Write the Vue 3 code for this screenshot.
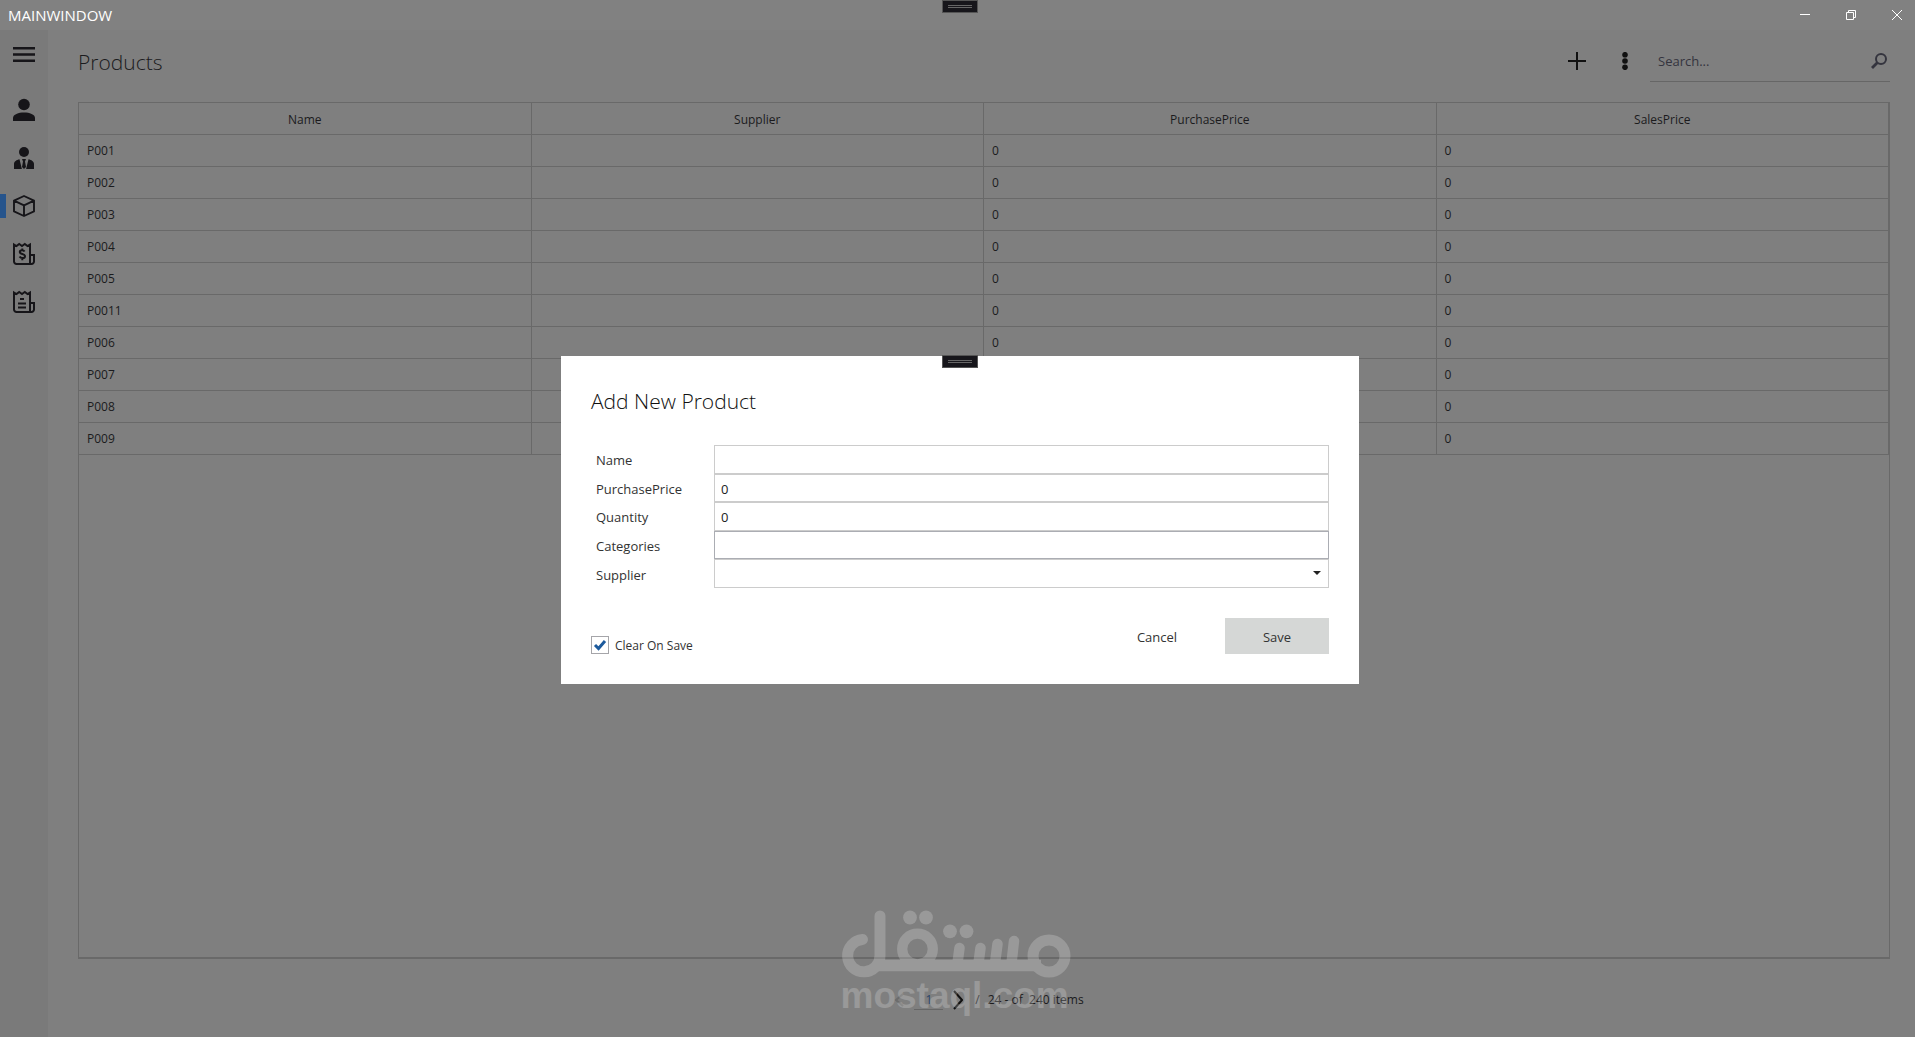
<script setup>
import { ref } from 'vue'

const columns = ['Name', 'Supplier', 'PurchasePrice', 'SalesPrice']
const names = ['P001', 'P002', 'P003', 'P004', 'P005', 'P0011', 'P006', 'P007', 'P008', 'P009']
const name = ref('')
const purchasePrice = ref('0')
const quantity = ref('0')
const categories = ref('')
const supplier = ref('')
const clearOnSave = ref(true)
</script>

<template>
  <div class="window">
    <header class="titlebar">
      <span class="app-title">MAINWINDOW</span>
      <div class="window-buttons">
        <button type="button" aria-label="Minimize">
          <svg viewBox="0 0 16 16"><path d="M3 7.500h10" /></svg>
        </button>
        <button type="button" aria-label="Restore">
          <svg viewBox="0 0 16 16"><path d="M3.500 5.500h7v7h-7zM5.500 5.500v-2h7v7h-2" /></svg>
        </button>
        <button type="button" aria-label="Close">
          <svg viewBox="0 0 16 16"><path d="M3 3l10 10M13 3L3 13" /></svg>
        </button>
      </div>
    </header>

    <div class="body">
      <nav class="sidebar">
        <button type="button" class="nav-item menu" aria-label="Menu">
          <svg viewBox="0 0 22 22"><path d="M0 5.200h22M0 11.500h22M0 17.700h22" fill="none" stroke="currentColor" stroke-width="2.400" /></svg>
        </button>
        <button type="button" class="nav-item" aria-label="Customers">
          <svg viewBox="0 0 22 22"><circle cx="11" cy="5.500" r="5.800" /><path d="M0 22v-3c0-3.600 5.500-5.500 11-5.500s11 1.900 11 5.500v3z" /></svg>
        </button>
        <button type="button" class="nav-item" aria-label="Suppliers">
          <svg viewBox="0 0 22 22"><circle cx="11" cy="5" r="5" /><path d="M6.500 12.300l2.400 9.700H1v-5c0-2.600 2.600-4 5.500-4.700zM15.500 12.300l-2.400 9.700H21v-5c0-2.600-2.600-4-5.500-4.700zM9 12h4l-1 2.600 1 5.400-2 2-2-2 1-5.400z" /></svg>
        </button>
        <button type="button" class="nav-item active" aria-label="Products">
          <svg viewBox="0 0 22 22"><path d="M11 1l10 4.600v10.800L11 21 1 16.400V5.600zM1 5.600l10 4.700 10-4.700M11 10.300V21" fill="none" stroke="currentColor" stroke-width="1.900" stroke-linejoin="round" /></svg>
        </button>
        <button type="button" class="nav-item" aria-label="Sales">
          <svg viewBox="0 0 22 22">
            <g fill="none" stroke="currentColor" stroke-width="2">
              <path d="M1 1.500l2.500 1.500 2.700-2 2.800 2 2.800-2 2.700 2L17 1.500V21H3.500A2.500 2.500 0 0 1 1 18.500zM17 12h4v6.500A2.500 2.500 0 0 1 18.500 21H16" />
              <path d="M11.600 8.600c-.6-1-1.400-1.300-2.500-1.300-1.400 0-2.300.7-2.300 1.700 0 2.700 5.200 1.300 5.200 4.200 0 1.200-1 1.900-2.600 1.900-1.200 0-2.200-.5-2.800-1.500M9.300 5.500v2M9.300 15v2.200" />
            </g>
          </svg>
        </button>
        <button type="button" class="nav-item" aria-label="Purchases">
          <svg viewBox="0 0 22 22">
            <g fill="none" stroke="currentColor" stroke-width="2">
              <path d="M1 1.500l2.500 1.500 2.700-2 2.800 2 2.800-2 2.700 2L17 1.500V21H3.500A2.500 2.500 0 0 1 1 18.500zM17 12h4v6.500A2.500 2.500 0 0 1 18.500 21H16" />
              <path d="M7 8h4M5 12.500h8M5 16.500h8" />
            </g>
          </svg>
        </button>
      </nav>

      <main class="content">
        <div class="toolbar">
          <h1>Products</h1>
          <button type="button" class="tool" aria-label="Add">
            <svg viewBox="0 0 18 18"><path d="M9 0v18M0 9h18" fill="none" stroke="currentColor" stroke-width="2" /></svg>
          </button>
          <button type="button" class="tool" aria-label="More">
            <svg viewBox="0 0 18 18"><circle cx="9" cy="2.700" r="2.800" /><circle cx="9" cy="9" r="2.800" /><circle cx="9" cy="15.300" r="2.800" /></svg>
          </button>
          <label class="search">
            <input type="text" placeholder="Search..." aria-label="Search" />
            <svg viewBox="0 0 16 16"><circle cx="10" cy="6" r="5" fill="none" stroke="currentColor" stroke-width="2" /><path d="M6.500 9.500L1 15" fill="none" stroke="currentColor" stroke-width="2.800" /></svg>
          </label>
        </div>

        <div class="grid-frame">
          <table>
            <thead>
              <tr><th v-for="c in columns" :key="c" scope="col">{{ c }}</th></tr>
            </thead>
            <tbody>
              <tr v-for="n in names" :key="n">
                <td>{{ n }}</td>
                <td></td>
                <td>0</td>
                <td>0</td>
              </tr>
            </tbody>
          </table>
        </div>

        <footer class="pager">
          <button type="button" class="previous" aria-label="Previous page">
            <svg viewBox="0 0 10 20"><path d="M9 4L2 10l7 6" /></svg>
          </button>
          <input type="text" value="1" aria-label="Page" />
          <button type="button" class="next" aria-label="Next page">
            <svg viewBox="0 0 10 20"><path d="M1 1l8 9-8 9" /></svg>
          </button>
          <span class="slash">/</span>
          <span>24 - of&nbsp; 240 items</span>
        </footer>
      </main>
    </div>

    <div class="overlay">
      <span class="grip window-grip"></span>
      <form class="dialog" role="dialog" aria-labelledby="dialog-title" @submit.prevent>
        <span class="grip dialog-grip"></span>
        <h2 id="dialog-title">Add New Product</h2>
        <div class="fields">
          <label for="f-name">Name</label>
          <input id="f-name" v-model="name" type="text" />
          <label for="f-price">PurchasePrice</label>
          <input id="f-price" v-model="purchasePrice" type="text" />
          <label for="f-quantity">Quantity</label>
          <input id="f-quantity" v-model="quantity" type="text" />
          <label for="f-categories">Categories</label>
          <input id="f-categories" v-model="categories" type="text" class="strong" />
          <label for="f-supplier">Supplier</label>
          <div class="select-box">
            <select id="f-supplier" v-model="supplier"><option value=""></option></select>
            <svg viewBox="0 0 8 4"><path d="M0 0h8L4 4z" /></svg>
          </div>
        </div>
        <div class="actions">
          <label class="check">
            <input v-model="clearOnSave" type="checkbox" />
            <svg v-if="clearOnSave" viewBox="0 0 18 18"><path d="M4 9l3.500 3.500L14 5" /></svg>
            <span>Clear On Save</span>
          </label>
          <button type="button">Cancel</button>
          <button type="submit" class="save">Save</button>
        </div>
      </form>
    </div>

    <div class="watermark">
      <svg viewBox="0 0 230 68" role="img" aria-label="مستقل">
        <g fill="none" stroke="currentColor" stroke-width="11" stroke-linecap="round">
          <circle cx="208" cy="46" r="16" />
          <circle cx="76.500" cy="39" r="15.300" stroke-width="10.300" />
          <path d="M21.500 29.500a16.200 16.200 0 1 0 17.500 16V6" />
          <path d="M34 55.500H200" stroke-width="11.500" stroke-linecap="butt" />
          <path d="M118.500 38l-2 15M139.500 38l-2 15M156.500 34l-2.500 19M173 31l-2.500 22" stroke-width="10.500" />
        </g>
        <circle cx="69" cy="7.500" r="6.900" /><circle cx="85" cy="7.500" r="6.900" />
        <circle cx="109" cy="21.300" r="6.900" /><circle cx="125.500" cy="21.300" r="6.900" />
      </svg>
      <span>mostaql.com</span>
    </div>
  </div>
</template>

<style>
body { background: #7f7f7f; }
</style>

<style scoped>
* { box-sizing: border-box; }
.window {
  position: relative;
  display: flex;
  flex-direction: column;
  min-height: 100vh;
  background: #7f7f7f;
  color: #1b1b1d;
  font: 12px/16px "Open Sans", "Noto Sans", sans-serif;
}
button, input, select { margin: 0; padding: 0; border: 0; border-radius: 0; background: none; color: inherit; font: inherit; outline: 0; }
svg { display: block; fill: currentColor; }
h1, h2 { margin: 0; font-size: 21px; line-height: 30px; font-weight: 300; }

.titlebar { display: flex; align-items: center; justify-content: space-between; height: 30px; padding: 0 10px 0 8px; background: #818181; color: #fff; }
.app-title { font-size: 15px; line-height: 20px; }
.window-buttons { display: flex; gap: 30px; }
.window-buttons svg { width: 16px; height: 16px; fill: none; stroke: #fff; stroke-width: 1; }

.body { display: flex; flex: 1; }
.sidebar { display: flex; flex-direction: column; width: 48px; background: #7a7a7a; color: #161519; }
.nav-item { display: grid; place-items: center; width: 48px; height: 48px; }
.nav-item.menu { margin-bottom: 8px; }
.nav-item svg { width: 22px; height: 22px; overflow: visible; }
.nav-item.active { background: linear-gradient(#26548c, #26548c) 0 50% / 6px 24px no-repeat; }

.content { display: flex; flex: 1; flex-direction: column; padding: 10px 25px 0 30px; }
.toolbar { display: flex; align-items: center; height: 42px; margin-bottom: 20px; }
.toolbar h1 { flex: 1; padding-top: 2px; line-height: 42px; }
.tool { display: grid; place-items: center; width: 48px; height: 42px; color: #111; }
.tool svg { width: 18px; height: 18px; }
.search { display: flex; align-items: center; width: 240px; height: 42px; margin-left: 1px; padding: 0 3px 0 8px; border-bottom: 1px solid #666; color: #34343e; }
.search input { flex: 1; min-width: 0; font-size: 13px; }
.search input::placeholder { color: #34343e; opacity: 1; }
.search svg { width: 16px; height: 16px; }

.grid-frame { flex: 1; border: 1px solid #696969; border-bottom-width: 2px; }
table { width: 100%; border-collapse: separate; border-spacing: 0; table-layout: fixed; }
th, td { height: 32px; padding: 0 8px; border-right: 1px solid #696969; border-bottom: 1px solid #696969; font-weight: 400; text-align: left; }
th { padding-top: 2px; text-align: center; }

.pager { display: flex; align-items: center; justify-content: center; height: 78px; padding: 4px 0 0 10px; }
.pager svg { width: 10px; height: 20px; fill: none; stroke: currentColor; stroke-width: 2; }
.pager .previous { color: #6c6c6c; }
.pager input { width: 29px; height: 20px; margin: 0 10px; border-bottom: 1px solid #666; color: #2b4468; text-align: center; }
.pager .next { color: #111; }
.pager .slash { margin: 0 8px 0 12px; }

.overlay { position: absolute; inset: 0; display: grid; place-items: center; padding: 3px 0 0 5px; }
.grip { position: absolute; left: 50%; width: 36px; height: 13px; margin-left: -18px; border: 1px solid #555; background: linear-gradient(#666, #666) 50% 4px / 24px 1px no-repeat, linear-gradient(#666, #666) 50% 6px / 24px 1px no-repeat, #17161b; }
.window-grip { top: 0; margin-left: -16px; }
.dialog-grip { top: -1px; }
.dialog { position: relative; width: 798px; padding: 30px; background: #fff; color: #333; }
.dialog h2 { margin-bottom: 29px; color: #111; }
.fields { display: grid; grid-template-columns: 123px 1fr; grid-template-rows: repeat(5, 1fr); height: 143px; font-size: 13px; }
.fields label { align-self: center; padding: 2px 0 0 5px; }
.fields input, .select-box { min-height: 0; border: 1px solid #ccc; background: #fff; color: #222; }
.fields input { width: 100%; padding: 2px 6px 0; }
.fields .strong { border-color: #abadb3; }
.select-box { position: relative; }
.select-box select { display: block; width: 100%; height: 100%; appearance: none; }
.select-box svg { position: absolute; top: 11px; right: 7px; width: 8px; height: 4px; pointer-events: none; }
.actions { display: flex; align-items: flex-end; gap: 16px; margin-top: 30px; }
.actions button { width: 104px; height: 36px; padding-top: 2px; font-size: 13px; }
.actions .save { background: #d5d7d6; }
.check { position: relative; display: flex; flex: 1; align-items: center; gap: 6px; height: 18px; }
.check span { padding-top: 2px; }
.check input { width: 18px; height: 18px; appearance: none; border: 1px solid #a5a5a9; }
.check svg { position: absolute; top: 0; left: 0; width: 18px; height: 18px; fill: none; stroke: #1c5a9c; stroke-width: 3; pointer-events: none; }

.watermark { position: absolute; bottom: 23px; left: 50%; width: 230px; margin-left: -117px; color: #fff; opacity: 0.2; pointer-events: none; }
.watermark svg { width: 230px; height: 68px; overflow: visible; }
.watermark span { display: block; font: 700 37px/36px "Liberation Sans", Arial, sans-serif; }
</style>
